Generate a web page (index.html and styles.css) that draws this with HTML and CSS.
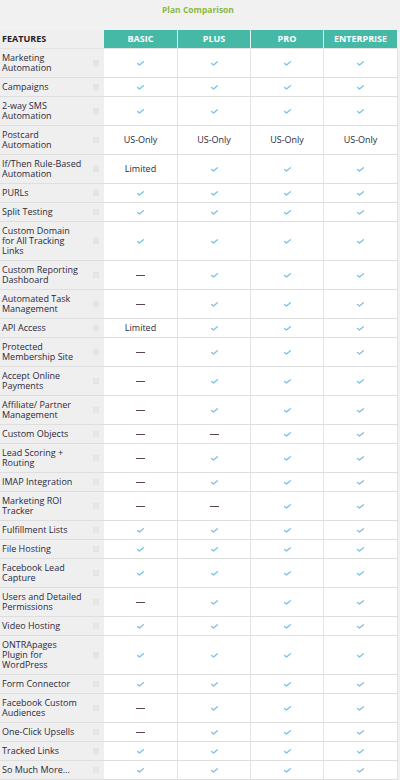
FILE: index.html
```html
<!DOCTYPE html>
<html>
<head>
<meta charset="utf-8">
<title>Plan Comparison</title>
<link rel="stylesheet" href="styles.css">
</head>
<body>
<div class="title">Plan Comparison</div>
<table class="cmp">
  <colgroup>
    <col class="c-feat"><col class="c-basic"><col class="c-plus"><col class="c-pro"><col class="c-ent">
  </colgroup>
  <thead>
    <tr>
      <th class="feat-h">FEATURES</th>
      <th class="plan-h">BASIC</th>
      <th class="plan-h">PLUS</th>
      <th class="plan-h">PRO</th>
      <th class="plan-h">ENTERPRISE</th>
    </tr>
  </thead>
  <tbody id="rows"></tbody>
</table>
<script src="script.js"></script>
</body>
</html>
```
FILE: script.js
```js
var Y = 'y', N = 'n';
var data = [
  ['Marketing Automation', Y, Y, Y, Y],
  ['Campaigns', Y, Y, Y, Y],
  ['2-way SMS Automation', Y, Y, Y, Y],
  ['Postcard Automation', 'US-Only', 'US-Only', 'US-Only', 'US-Only'],
  ['If/Then Rule-Based Automation', 'Limited', Y, Y, Y],
  ['PURLs', Y, Y, Y, Y],
  ['Split Testing', Y, Y, Y, Y],
  ['Custom Domain for All Tracking Links', Y, Y, Y, Y],
  ['Custom Reporting Dashboard', N, Y, Y, Y],
  ['Automated Task Management', N, Y, Y, Y],
  ['API Access', 'Limited', Y, Y, Y],
  ['Protected Membership Site', N, Y, Y, Y],
  ['Accept Online Payments', N, Y, Y, Y],
  ['Affiliate/ Partner Management', N, Y, Y, Y],
  ['Custom Objects', N, N, Y, Y],
  ['Lead Scoring + Routing', N, Y, Y, Y],
  ['IMAP Integration', N, Y, Y, Y],
  ['Marketing ROI Tracker', N, N, Y, Y],
  ['Fulfillment Lists', Y, Y, Y, Y],
  ['File Hosting', Y, Y, Y, Y],
  ['Facebook Lead Capture', Y, Y, Y, Y],
  ['Users and Detailed Permissions', N, Y, Y, Y],
  ['Video Hosting', Y, Y, Y, Y],
  ['ONTRApages Plugin for WordPress', Y, Y, Y, Y],
  ['Form Connector', Y, Y, Y, Y],
  ['Facebook Custom Audiences', N, Y, Y, Y],
  ['One-Click Upsells', N, Y, Y, Y],
  ['Tracked Links', Y, Y, Y, Y],
  ['So Much More...', Y, Y, Y, Y]
];
var CHECK = '<svg class="check" width="7" height="5" viewBox="0 0 7 5"><path d="M0.6 2.4 L2.5 4.1 L6.4 0.7" fill="none" stroke="#7cc3e6" stroke-width="1.3" stroke-linecap="round" stroke-linejoin="round"/></svg>';
var html = '';
data.forEach(function (r) {
  html += '<tr><td class="feat"><div class="feat-in"><span class="feat-name">' + r[0] +
    '</span><span class="info"></span></div></td>';
  for (var i = 1; i < 5; i++) {
    var v = r[i];
    var c = v === Y ? CHECK : (v === N ? '<span class="dash"></span>' : v);
    html += '<td class="val">' + c + '</td>';
  }
  html += '</tr>';
});
document.getElementById('rows').innerHTML = html;
```
FILE: styles.css
```css
html, body {
  margin: 0;
  padding: 0;
  background: #f1f1f1;
}
body {
  font-family: "Open Sans", "Liberation Sans", sans-serif;
  font-size: 9px;
  color: #2b2a3c;
  width: 400px;
}
.title {
  height: 30px;
  box-sizing: border-box;
  padding-top: 3px;
  line-height: 13px;
  text-align: center;
  font-size: 8.5px;
  font-weight: 700;
  color: #8db83f;
  padding-right: 4px;
}
.cmp {
  width: 398px;
  table-layout: fixed;
  border-collapse: separate;
  border-spacing: 0;
}
.c-feat { width: 104px; }
.c-basic { width: 74px; }
.c-plus { width: 73px; }
.c-pro { width: 73px; }
.c-ent { width: 74px; }
th {
  height: 18px;
  padding: 0;
  font-weight: 700;
  line-height: 10px;
  border-bottom: 1px solid #e4e4e4;
}
.feat-h {
  text-align: left;
  padding-left: 2px;
  color: #1f1f2a;
  background: #efefef;
}
.plan-h {
  background: #46b9a6;
  color: #ffffff;
  text-align: center;
  border-right: 1px solid #e9f4f1;
}
td {
  padding: 4px 0;
  line-height: 10px;
  border-bottom: 1px solid #dedede;
  vertical-align: middle;
}
.feat {
  background: #efefef;
  padding-left: 2px;
  padding-right: 5px;
}
.feat-in {
  display: flex;
  align-items: center;
  justify-content: space-between;
}
.feat-name {
  width: 82px;
}
.info {
  width: 4px;
  height: 4px;
  border: 1px solid #e2e2e2;
  background: #e6e6e6;
  border-radius: 1px;
  flex: none;
}
.val {
  background: #ffffff;
  text-align: center;
  border-right: 1px solid #e3e3e3;
  color: #2b2a3c;
}
.check {
  display: inline-block;
  vertical-align: middle;
}
.dash {
  display: inline-block;
  width: 9px;
  height: 1px;
  background: #5c4256;
  vertical-align: middle;
}
```
